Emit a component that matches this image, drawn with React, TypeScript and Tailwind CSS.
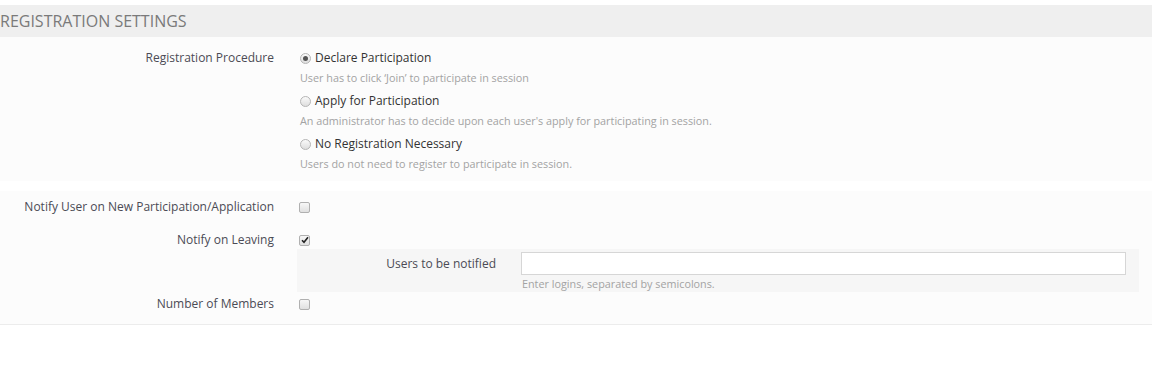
import React from "react";

const FONT = "font-['Open_Sans',_'Liberation_Sans',_sans-serif]";

function Radio({ checked }: { checked?: boolean }) {
  return (
    <span className="inline-flex h-[11px] w-[11px] shrink-0 items-center justify-center rounded-full border border-[#b5b5b5] bg-gradient-to-b from-[#fafafa] to-[#dedede]">
      {checked && <span className="h-[5px] w-[5px] rounded-full bg-[#555]" />}
    </span>
  );
}

function Check({ checked }: { checked?: boolean }) {
  return (
    <span className="inline-flex h-[11px] w-[11px] shrink-0 items-center justify-center rounded-[2px] border border-[#b0b0b0] bg-gradient-to-b from-[#f7f7f7] to-[#e0e0e0]">
      {checked && (
        <svg width="8" height="8" viewBox="0 0 8 8">
          <path d="M1 4.2 L3 6.3 L7 1.2" fill="none" stroke="#222" strokeWidth="1.6" />
        </svg>
      )}
    </span>
  );
}

const OPTIONS = [
  { label: "Declare Participation", help: "User has to click \u2018Join\u2019 to participate in session", checked: true },
  { label: "Apply for Participation", help: "An administrator has to decide upon each user's apply for participating in session." },
  { label: "No Registration Necessary", help: "Users do not need to register to participate in session." },
];

function Label({ children }: { children: React.ReactNode }) {
  return <div className="w-[297px] shrink-0 pr-[23px] text-right text-[12px] leading-[20px] text-[#4b4b55]">{children}</div>;
}

function CheckRow({ label, checked, className = "" }: { label: string; checked?: boolean; className?: string }) {
  return (
    <div className={`flex h-[20px] items-center ${className}`}>
      <Label>{label}</Label>
      <div className="flex pl-[2px]">
        <Check checked={checked} />
      </div>
    </div>
  );
}

export default function App() {
  return (
    <div className={`${FONT} w-[1152px] bg-white pt-[5px]`}>
      <div className="flex h-[32px] items-center bg-[#efefef] text-[16px] text-[#7a7a7a]">
        REGISTRATION SETTINGS
      </div>

      <div className="flex bg-[#fcfcfc] pt-[11px] pb-[8px]">
        <Label>Registration Procedure</Label>
        <div className="flex flex-col gap-[4px]">
          {OPTIONS.map((o) => (
            <div key={o.label} className="flex flex-col gap-[1px]">
              <div className="flex h-[20px] items-center gap-[4px] pl-[3px] text-[12px] text-[#333]">
                <Radio checked={o.checked} />
                <span>{o.label}</span>
              </div>
              <div className="pl-[3px] text-[10.8px] leading-[18px] text-[#a3a3a3]">{o.help}</div>
            </div>
          ))}
        </div>
      </div>

      <div className="mt-[10px] flex flex-col border-b border-[#ececec] bg-[#fcfcfc] pt-[6px] pb-[10px]">
        <CheckRow label="Notify User on New Participation/Application" />
        <CheckRow label="Notify on Leaving" checked className="mt-[13px]" />
        <div className="-mt-[1px] ml-[297px] mr-[13px] flex bg-[#f6f6f6] pt-[3px] pb-[1px]">
          <div className="w-[224px] shrink-0 pt-[2px] pr-[25px] text-right text-[12px] leading-[20px] text-[#4b4b55]">
            Users to be notified
          </div>
          <div className="flex flex-1 flex-col pr-[13px]">
            <input className="h-[23px] w-full border border-[#d6d6d6] bg-white outline-none" />
            <div className="pl-[1px] pt-[2px] text-[10.8px] leading-[14px] text-[#a3a3a3]">Enter logins, separated by semicolons.</div>
          </div>
        </div>
        <CheckRow label="Number of Members" className="mt-[2px]" />
      </div>
    </div>
  );
}
